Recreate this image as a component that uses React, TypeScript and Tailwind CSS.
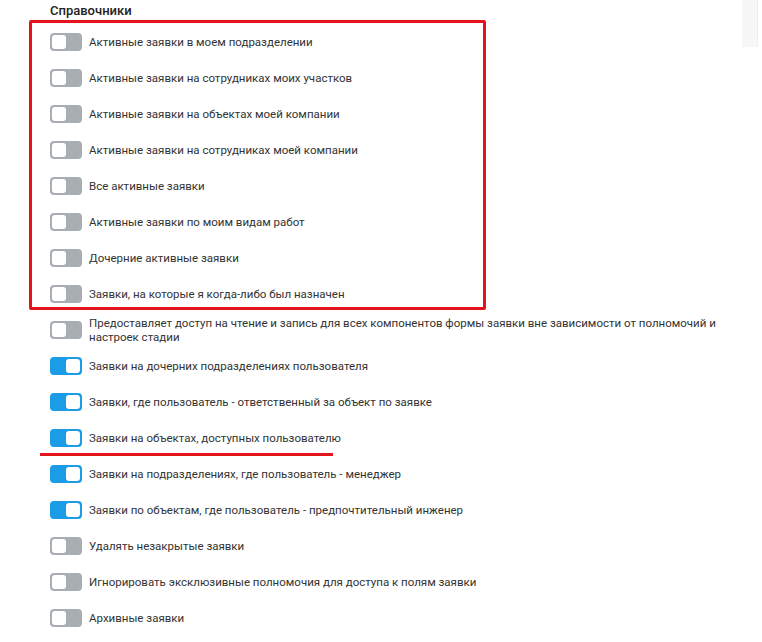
import React from "react";

type Item = { label: string; on: boolean };

const boxed: Item[] = [
  { label: "Активные заявки в моем подразделении", on: false },
  { label: "Активные заявки на сотрудниках моих участков", on: false },
  { label: "Активные заявки на объектах моей компании", on: false },
  { label: "Активные заявки на сотрудниках моей компании", on: false },
  { label: "Все активные заявки", on: false },
  { label: "Активные заявки по моим видам работ", on: false },
  { label: "Дочерние активные заявки", on: false },
  { label: "Заявки, на которые я когда-либо был назначен", on: false },
];

const rest: Item[] = [
  {
    label:
      "Предоставляет доступ на чтение и запись для всех компонентов формы заявки вне зависимости от полномочий и настроек стадии",
    on: false,
  },
  { label: "Заявки на дочерних подразделениях пользователя", on: true },
  { label: "Заявки, где пользователь - ответственный за объект по заявке", on: true },
  { label: "Заявки на объектах, доступных пользователю", on: true },
  { label: "Заявки на подразделениях, где пользователь - менеджер", on: true },
  { label: "Заявки по объектам, где пользователь - предпочтительный инженер", on: true },
  { label: "Удалять незакрытые заявки", on: false },
  { label: "Игнорировать эксклюзивные полномочия для доступа к полям заявки", on: false },
  { label: "Архивные заявки", on: false },
];

const Toggle = ({ on }: { on: boolean }) => (
  <span
    className={`flex shrink-0 w-[32px] h-[18px] rounded-[4px] p-[2px] ${
      on ? "bg-[#1c9be6] justify-end" : "bg-[#a9aeb4] justify-start"
    }`}
  >
    <span className="block w-[14px] h-[14px] rounded-[3px] bg-white" />
  </span>
);

const Row = ({ item }: { item: Item }) => (
  <div className="flex shrink-0 items-center h-[36px] gap-[7px]">
    <Toggle on={item.on} />
    <span className="text-[11.5px] leading-[14px] text-[#333] max-w-[636px]">{item.label}</span>
  </div>
);

export default function App() {
  return (
    <div
      className="flex w-[762px] h-[642px] bg-white overflow-hidden"
      style={{ fontFamily: 'Roboto, "Noto Sans", sans-serif' }}
    >
      <div className="flex-1 flex flex-col pl-[50px] pt-[3px]">
        <h3 className="text-[13px] leading-[16px] font-medium text-[#222] mb-[1px]">Справочники</h3>

        {/* выделенный блок */}
        <div className="flex flex-col shrink-0 -ml-[21px] pl-[18px] w-[457px] h-[290px] border-[3px] border-[#e3141b] rounded-[2px]">
          <div className="h-[1px] shrink-0" />
          {boxed.map((it) => (
            <Row key={it.label} item={it} />
          ))}
        </div>

        <div className="flex flex-col mt-[2px]">
          {rest.map((it, i) => (
            <React.Fragment key={it.label}>
              <Row item={it} />
              {i === 3 && <div className="shrink-0 -mt-[3px] -ml-[10px] w-[293px] h-[3px] bg-[#e3141b]" />}
            </React.Fragment>
          ))}
        </div>
      </div>

      {/* полоска справа вверху */}
      <div className="shrink-0 mr-[4px] w-[16px] h-[47px] bg-[#f6f7f9] border-r border-[#eceef1]" />
    </div>
  );
}
